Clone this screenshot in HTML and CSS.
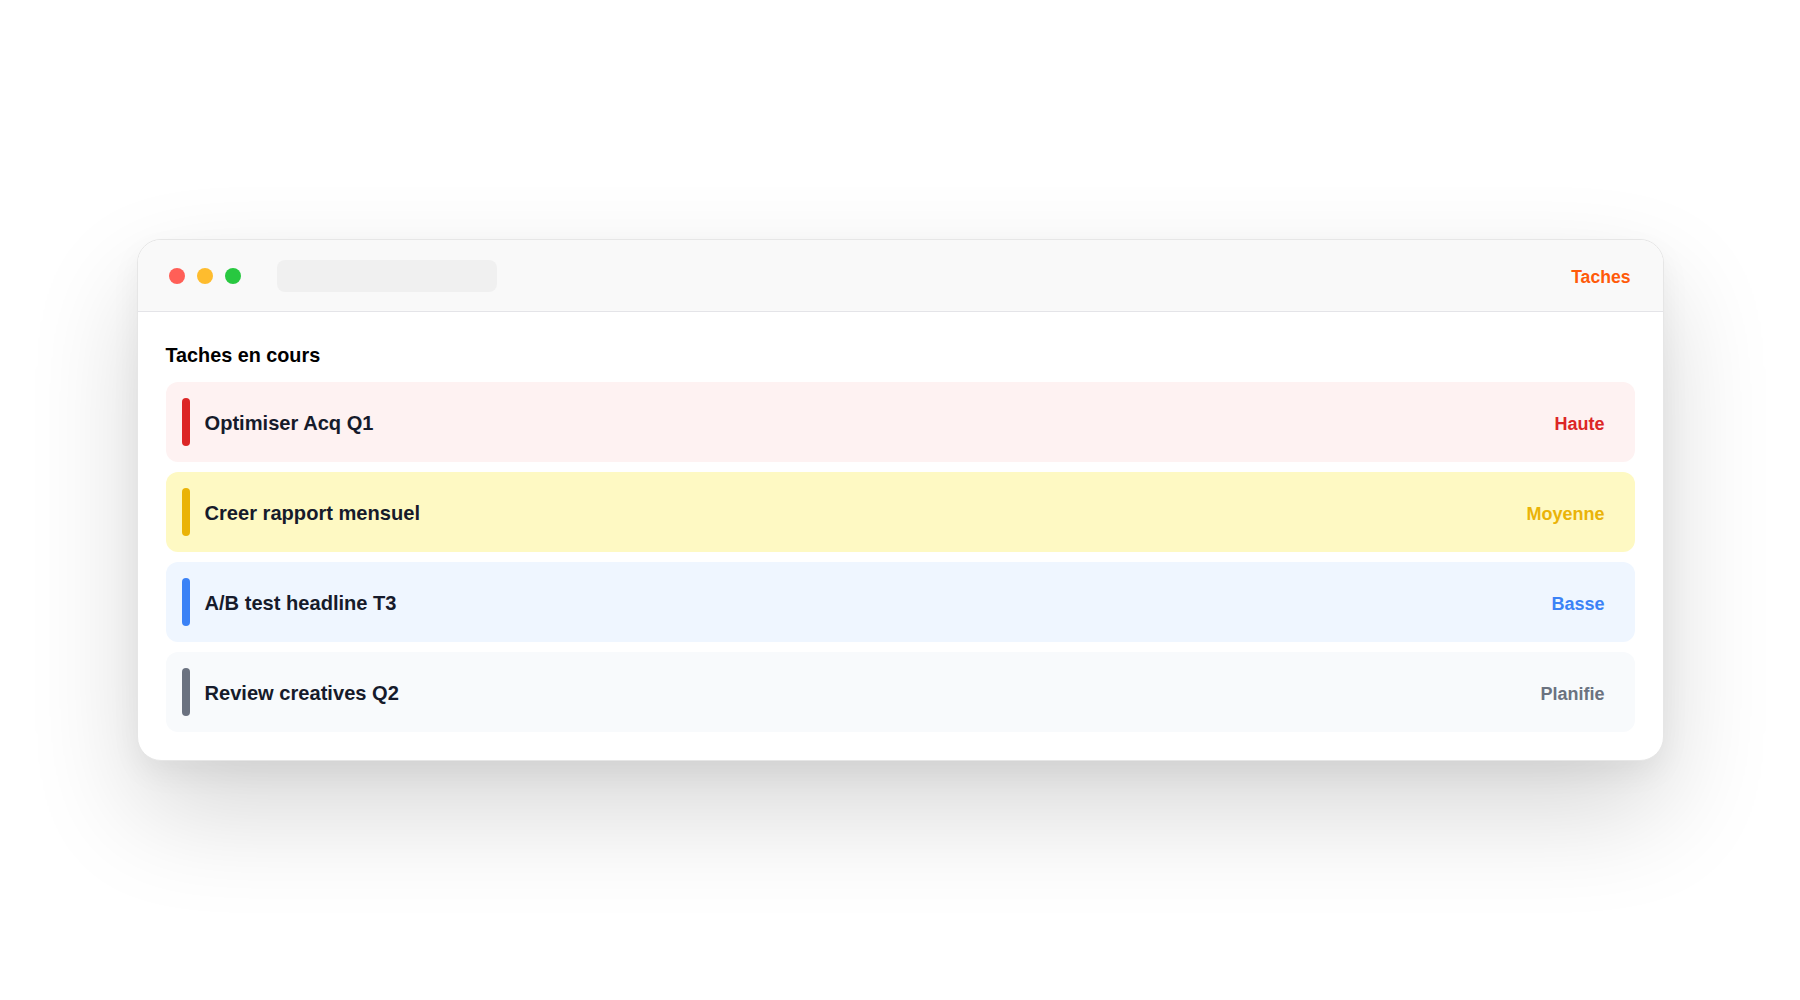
FILE: index.html
```html
<!DOCTYPE html>
<html lang="fr">
<head>
<meta charset="utf-8">
<title>Taches</title>
<link rel="stylesheet" href="styles.css">
</head>
<body>
  <main class="stage">
    <section class="window">
      <header class="titlebar">
        <div class="lights">
          <span class="light light-red"></span>
          <span class="light light-yellow"></span>
          <span class="light light-green"></span>
        </div>
        <div class="address"></div>
        <div class="titlebar-spacer"></div>
        <span class="app-name">Taches</span>
      </header>
      <div class="content">
        <h1 class="section-title">Taches en cours</h1>
        <ul class="tasks">
          <li class="task task-high">
            <span class="task-bar"></span>
            <span class="task-name">Optimiser Acq Q1</span>
            <span class="task-level">Haute</span>
          </li>
          <li class="task task-medium">
            <span class="task-bar"></span>
            <span class="task-name">Creer rapport mensuel</span>
            <span class="task-level">Moyenne</span>
          </li>
          <li class="task task-low">
            <span class="task-bar"></span>
            <span class="task-name">A/B test headline T3</span>
            <span class="task-level">Basse</span>
          </li>
          <li class="task task-planned">
            <span class="task-bar"></span>
            <span class="task-name">Review creatives Q2</span>
            <span class="task-level">Planifie</span>
          </li>
        </ul>
      </div>
    </section>
  </main>
</body>
</html>
```

FILE: styles.css
```css
* {
  box-sizing: border-box;
}

html, body {
  margin: 0;
  padding: 0;
  background: #ffffff;
}

body {
  font-family: "Liberation Sans", Arial, Helvetica, sans-serif;
  color: #111827;
}

.stage {
  min-height: 100vh;
  display: flex;
  align-items: center;
  justify-content: center;
}

.window {
  width: 1527px;
  background: #ffffff;
  border: 1px solid #e6e6e6;
  border-radius: 24px;
  overflow: hidden;
  box-shadow: 0 50px 110px rgba(0, 0, 0, 0.16), 0 12px 30px rgba(0, 0, 0, 0.05);
}

.titlebar {
  height: 72px;
  background: #f9f9f9;
  border-bottom: 1px solid #e4e4e8;
  display: flex;
  align-items: center;
  padding: 0 32px 0 31px;
}

.lights {
  display: flex;
  gap: 12px;
}

.light {
  width: 16px;
  height: 16px;
  border-radius: 50%;
  display: block;
}

.light-red { background: #ff5f57; }
.light-yellow { background: #febc2e; }
.light-green { background: #28c840; }

.address {
  width: 220px;
  height: 32px;
  margin-left: 36px;
  border-radius: 8px;
  background: #f0f0f0;
}

.titlebar-spacer {
  flex: 1;
}

.app-name {
  font-size: 17.6px;
  font-weight: 700;
  color: #ff5a0a;
  padding-top: 4px;
}

.content {
  padding: 28px;
}

.section-title {
  margin: 0 0 12px 0;
  font-size: 19.8px;
  line-height: 30px;
  font-weight: 700;
  color: #000000;
}

.tasks {
  list-style: none;
  margin: 0;
  padding: 0;
  display: flex;
  flex-direction: column;
  gap: 10px;
}

.task {
  height: 80px;
  border-radius: 12px;
  display: flex;
  align-items: center;
  padding: 0 30px 0 16px;
}

.task-bar {
  width: 8px;
  height: 48px;
  border-radius: 4px;
  flex: none;
}

.task-name {
  flex: 1;
  margin-left: 15px;
  padding-top: 2px;
  font-size: 20.1px;
  font-weight: 700;
  color: #161b2b;
}

.task-level {
  padding-top: 4px;
  font-size: 18px;
  font-weight: 700;
}

.task-high { background: #fef2f2; }
.task-high .task-bar { background: #dc2626; }
.task-high .task-level { color: #dc2626; }

.task-medium { background: #fef9c3; }
.task-medium .task-bar { background: #eab308; }
.task-medium .task-level { color: #eab308; }

.task-low { background: #eff6ff; }
.task-low .task-bar { background: #3b82f6; }
.task-low .task-level { color: #3b82f6; }

.task-planned { background: #f8fafc; }
.task-planned .task-bar { background: #6b7280; }
.task-planned .task-level { color: #6b7280; }
```
